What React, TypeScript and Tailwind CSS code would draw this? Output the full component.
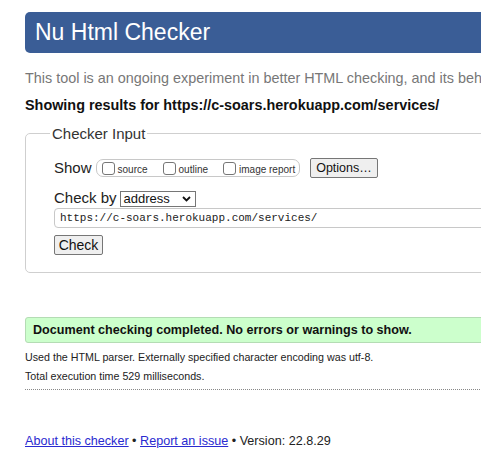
import React from "react";

function Box({ label }: { label: string }) {
  return (
    <span className="flex items-center">
      <span className="w-[13px] h-[13px] border border-[#767676] rounded-[3px] bg-white inline-block" />
      <span className="ml-[3px] text-[10px] text-[#333] leading-none mt-[3px]">{label}</span>
    </span>
  );
}

export default function App() {
  return (
    <div className="w-[481px] h-[461px] overflow-hidden bg-white" style={{ fontFamily: '"Liberation Sans", Arial, sans-serif' }}>
      <div className="w-[600px] pl-[25px] pt-[12px]">
        <div className="h-[41px] bg-[#3a5d96] rounded-[5px] flex items-center pl-[10px]">
          <span className="text-[23px] text-white leading-none">Nu Html Checker</span>
        </div>
        <p className="mt-[17px] text-[14.4px] leading-[17px] text-[#777] whitespace-nowrap">
          This tool is an ongoing experiment in better HTML checking, and its behavior remains subject to change
        </p>
        <p className="mt-[10px] text-[14.4px] leading-[17px] font-bold text-[#111] whitespace-nowrap">
          Showing results for https://c-soars.herokuapp.com/services/
        </p>
        <fieldset className="mt-[11px] border border-[#cfcfcf] rounded-[5px] pl-[28px] pt-[16px] pb-[15px]">
          <legend className="ml-[-4px] px-[2px] text-[15px] leading-[17px] text-[#333]">Checker Input</legend>
          <div className="flex items-center h-[20px]">
            <span className="text-[15px] text-[#222]">Show</span>
            <span className="ml-[4px] h-[18px] border border-[#c8c8c8] rounded-[7px] flex items-center pl-[5px] pr-[4px] gap-[15px]">
              <Box label="source" />
              <Box label="outline" />
              <Box label="image report" />
            </span>
            <button className="ml-[10px] h-[20px] px-[5px] bg-[#efefef] border border-[#767676] rounded-[2px] text-[12.5px] text-[#111] leading-none">
              Options…
            </button>
          </div>
          <div className="flex items-center mt-[12px] h-[17px]">
            <span className="text-[15px] text-[#222]">Check by</span>
            <span className="ml-[3px] w-[76px] h-[16px] border border-[#767676] flex items-center justify-between pl-[3px] pr-[4px] text-[13px] text-[#111] leading-none">
              address
              <svg width="9" height="6" viewBox="0 0 9 6">
                <path d="M1 1 L4.5 4.5 L8 1" stroke="#111" strokeWidth="1.8" fill="none" />
              </svg>
            </span>
          </div>
          <div className="mt-[1px] h-[20px] border border-[#c8c8c8] rounded-[4px] flex items-center pl-[5px] text-[11px] text-[#222]" style={{ fontFamily: '"Liberation Mono", "DejaVu Sans Mono", monospace' }}>
            https://c-soars.herokuapp.com/services/
          </div>
          <button className="mt-[7px] h-[20px] w-[49px] bg-[#efefef] border border-[#767676] rounded-[2px] text-[14px] text-[#111] leading-none">
            Check
          </button>
        </fieldset>
        <div className="mt-[44px] h-[26px] bg-[#ccffcc] border border-[#b4dcb4] rounded-[3px] flex items-center pl-[7px]">
          <span className="text-[12.6px] font-bold text-[#111]">Document checking completed. No errors or warnings to show.</span>
        </div>
        <p className="mt-[8px] text-[10.7px] leading-[13px] text-[#222]">Used the HTML parser. Externally specified character encoding was utf-8.</p>
        <p className="mt-[6px] text-[10.7px] leading-[13px] text-[#222]">Total execution time 529 milliseconds.</p>
        <div className="mt-[6px] border-t border-dotted border-[#888]" />
        <p className="mt-[43px] text-[12.6px] leading-[17px] text-[#222] whitespace-nowrap">
          <a className="text-[#2a2ad0] underline">About this checker</a> • <a className="text-[#2a2ad0] underline">Report an issue</a> • Version: 22.8.29
        </p>
      </div>
    </div>
  );
}
